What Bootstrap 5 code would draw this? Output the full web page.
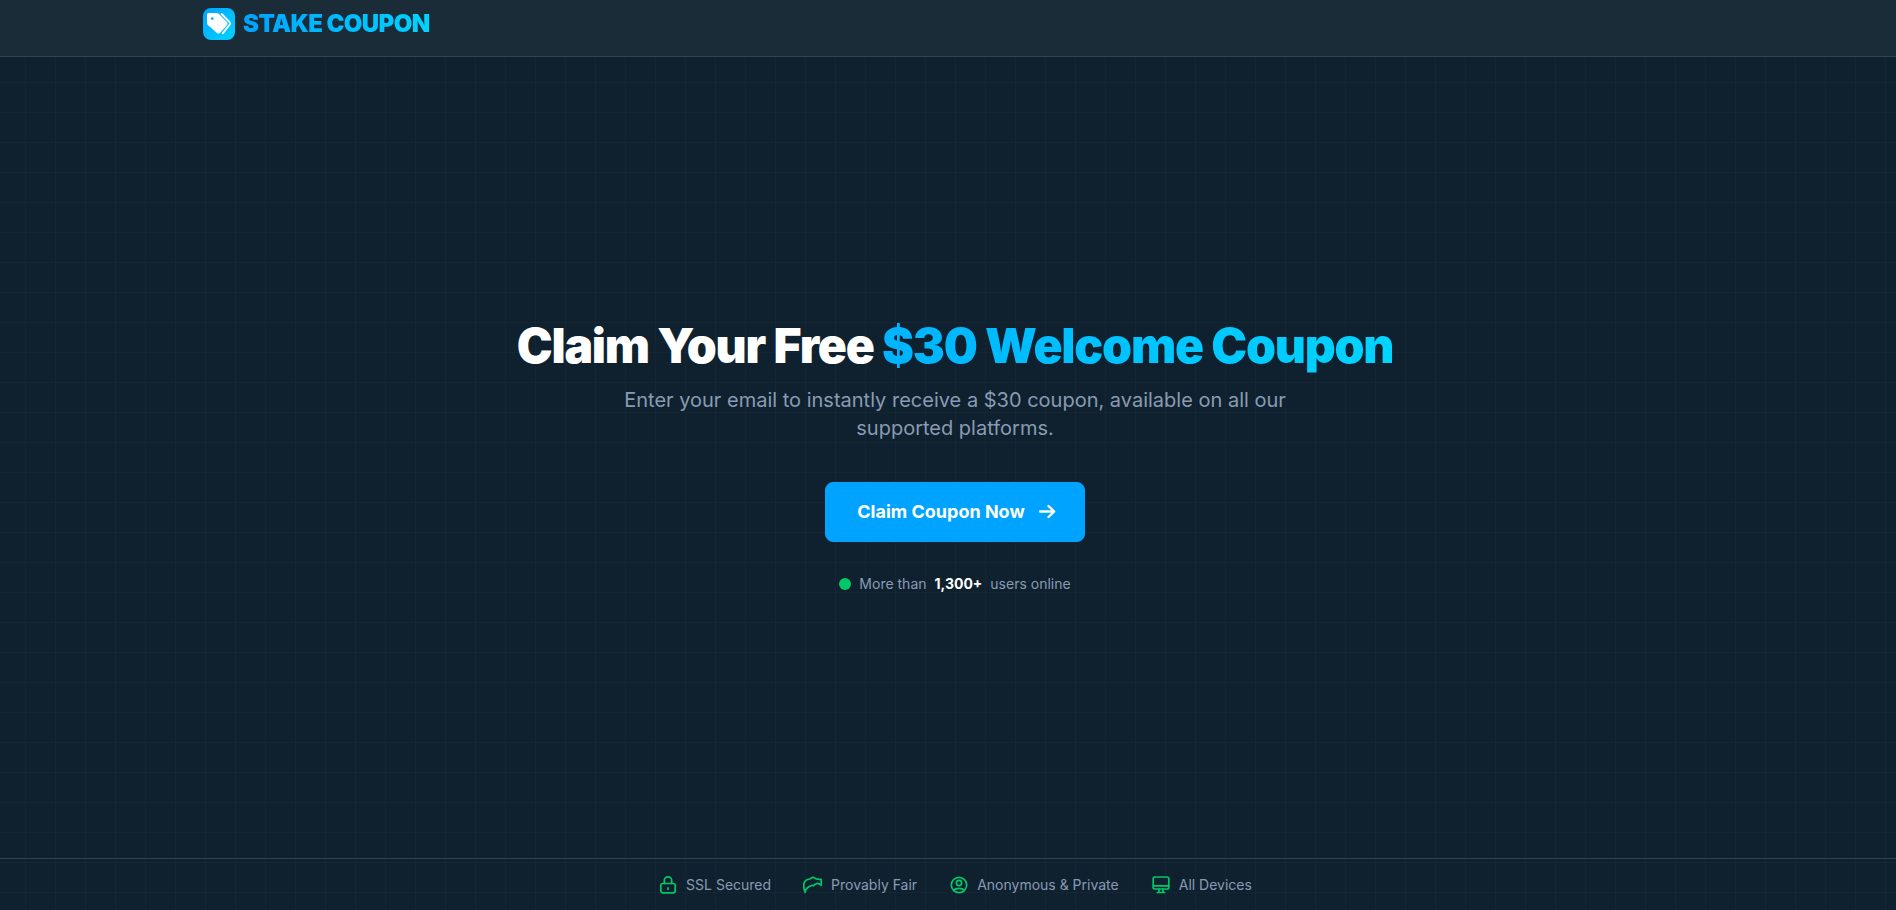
<!DOCTYPE html>
<html lang="en">
<head>
<meta charset="utf-8">
<meta name="viewport" content="width=device-width, initial-scale=1">
<title>Stake Coupon</title>
<link href="https://cdn.jsdelivr.net/npm/bootstrap@5.3.0/dist/css/bootstrap.min.css" rel="stylesheet">
<style>
  :root { --gutter: 14px; --line: #2f4553; --muted: #899bb4; --green: #00c767; }
  body {
    font-family: Inter, "Liberation Sans", sans-serif;
    color: #fff;
    background-color: #0f212e;
    background-image:
      linear-gradient(90deg, rgba(47, 69, 83, .13) 1px, transparent 1px),
      linear-gradient(rgba(47, 69, 83, .13) 1px, transparent 1px);
    background-size: 30px 30px;
    background-position: 25px 22px;
  }
  .shell { padding-left: var(--gutter); }
  .site-header { height: 57px; background: #1a2c38; border-bottom: 1px solid var(--line); }
  .header-inner { max-width: 1536px; }
  .brand-icon { width: 32px; height: 32px; border-radius: 8px; background: linear-gradient(135deg, #00a3ff, #00d4ff); }
  .gradient-text { background: linear-gradient(90deg, var(--from, #00a3ff), #00d4ff); -webkit-background-clip: text; background-clip: text; color: transparent; }
  .brand-name { font-size: 24px; line-height: 32px; font-weight: 900; letter-spacing: -0.025em; }
  .hero-title { --from: #00b4ff; font-size: 48px; line-height: 48px; font-weight: 900; letter-spacing: -0.025em; }
  .hero-lead { max-width: 672px; margin-bottom: 40px; font-size: 20px; line-height: 28px; color: var(--muted); }
  .btn-claim { --bs-btn-color: #fff; --bs-btn-bg: #00a3ff; --bs-btn-border-color: #00a3ff; --bs-btn-hover-color: #fff; --bs-btn-hover-bg: #0090e6; --bs-btn-hover-border-color: #0090e6; --bs-btn-border-radius: 8px; --bs-btn-padding-x: 31px; height: 60px; margin-bottom: 32px; gap: 12px; font-size: 18px; line-height: 28px; font-weight: 700; }
  .btn-claim svg { overflow: visible; }
  .online { font-size: 14px; line-height: 20px; color: var(--muted); }
  .online-dot { width: 12px; height: 12px; background: var(--green); }
  .site-footer { border-top: 1px solid var(--line); font-size: 14px; line-height: 20px; color: var(--muted); padding-top: 16px; padding-bottom: 15px; }
  .footer-list { column-gap: 32px; }
  .footer-list svg { width: 20px; height: 20px; fill: none; stroke: var(--green); stroke-width: 1.7; stroke-linejoin: round; stroke-linecap: round; }
</style>
</head>
<body class="min-vh-100 d-flex flex-column">
<header class="site-header shell">
  <div class="header-inner container-fluid px-3 pt-2">
    <a href="#" class="d-inline-flex align-items-center gap-2 text-decoration-none">
      <span class="brand-icon d-flex">
        <svg width="32" height="32" viewBox="0 0 32 32" fill="#fff" aria-hidden="true">
          <path fill-rule="evenodd" d="M5.500 5H13.500Q15 5 16 6L24 14.200Q25.300 15.500 24 17L17 25Q15.500 26.500 14 25L4.800 17Q4 16.200 4 15V6.500Q4 5 5.500 5ZM9.300 9.200a1.400 1.400 0 1 0 0 2.800 1.400 1.400 0 0 0 0-2.800z"/>
          <path d="M18.700 6l7.800 8.200q1.200 1.300 0 2.700L19.700 25.300" fill="none" stroke="#fff" stroke-width="1.900" stroke-linecap="round"/>
        </svg>
      </span>
      <span class="brand-name gradient-text">STAKE COUPON</span>
    </a>
  </div>
</header>

<main class="shell flex-grow-1 d-flex flex-column align-items-center justify-content-center text-center">
  <h1 class="hero-title mb-3">Claim Your Free <span class="gradient-text">$30 Welcome Coupon</span></h1>
  <p class="hero-lead">Enter your email to instantly receive a $30 coupon, available on all our supported platforms.</p>
  <button type="button" class="btn btn-claim d-inline-flex align-items-center">
    Claim Coupon Now
    <svg width="16" height="18" viewBox="0 0 16 18" fill="none" stroke="currentColor" stroke-width="2.300" stroke-linecap="round" stroke-linejoin="round" aria-hidden="true"><path d="M3 8.500H17M11.500 3l5.700 5.500L11.500 14"/></svg>
  </button>
  <div class="online d-flex align-items-center gap-2">
    <span class="online-dot rounded-circle"></span>
    <span>More than</span>
    <strong class="text-white">1,300+</strong>
    <span>users online</span>
  </div>
</main>

<footer class="site-footer shell">
  <ul class="footer-list list-unstyled d-flex flex-wrap justify-content-center mb-0">
    <li class="d-flex align-items-center gap-2">
      <svg viewBox="0 0 20 20" aria-hidden="true"><rect x="2.800" y="8.500" width="14.400" height="9.300" rx="2"/><path d="M6.300 8.500V5.500a3.700 3.700 0 0 1 7.400 0v3M10 12.800v1.500"/></svg>
      SSL Secured
    </li>
    <li class="d-flex align-items-center gap-2">
      <svg viewBox="0 0 20 20" aria-hidden="true"><path d="M2.200 17.500C.7 14 .5 10 1.200 7.500 2 5.500 4 4.200 6.500 4L10 2.200 13 3.800 18.300 4.700V10.300C16.500 8.800 15 8.300 13.700 8.500L11.800 9.500 10.500 10.800 9.300 10.300 5.800 11.700C3.500 13 2.300 15 2.200 17.500Z"/></svg>
      Provably Fair
    </li>
    <li class="d-flex align-items-center gap-2">
      <svg viewBox="0 0 20 20" aria-hidden="true"><circle cx="10" cy="10" r="7.700"/><circle cx="10" cy="8" r="2.600"/><path d="M4.800 15.300C6 13.700 8 13.400 10 13.400s4 .3 5.200 1.900"/></svg>
      Anonymous &amp; Private
    </li>
    <li class="d-flex align-items-center gap-2">
      <svg viewBox="0 0 20 20" aria-hidden="true"><rect x="2.200" y="2" width="15.600" height="12" rx="1.800"/><path d="M2.200 10.800h15.600M8 14.200v3M12 14.200v3M6.300 17.500h7.400"/></svg>
      All Devices
    </li>
  </ul>
</footer>
<script src="https://cdn.jsdelivr.net/npm/bootstrap@5.3.0/dist/js/bootstrap.bundle.min.js"></script>
</body>
</html>
